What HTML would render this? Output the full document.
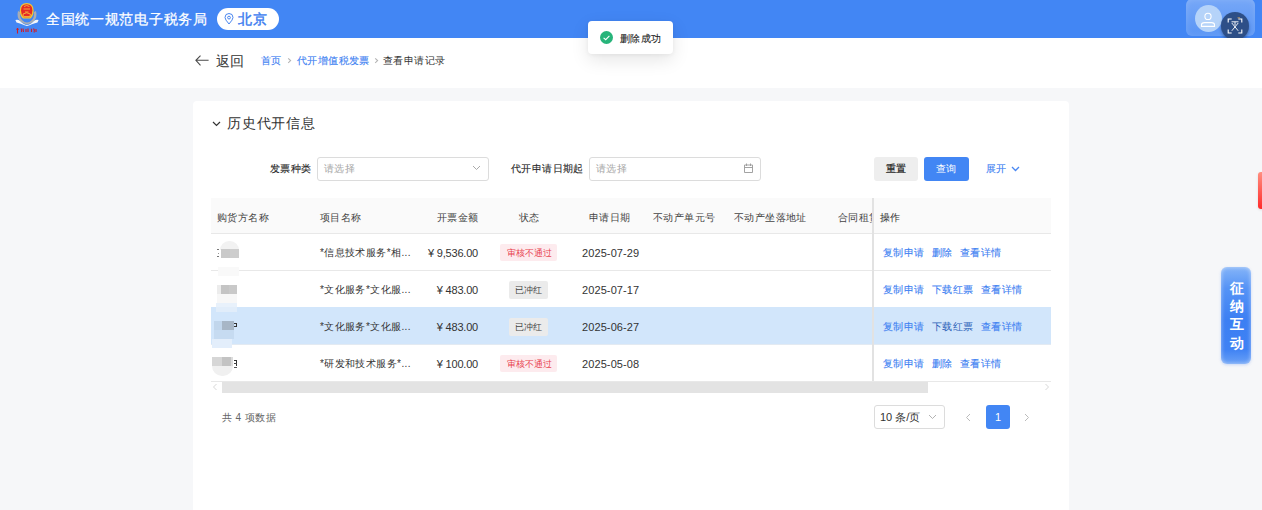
<!DOCTYPE html>
<html><head><meta charset="utf-8">
<style>
*{box-sizing:border-box;margin:0;padding:0}
html,body{width:1262px;height:510px;overflow:hidden;background:#f6f7f9;font-family:"Liberation Sans",sans-serif;color:#333}
.abs{position:absolute}
.hdr{left:0;top:0;width:1262px;height:38px;background:#4286f4}
.sub{left:0;top:38px;width:1262px;height:50px;background:#fff}
.t{position:absolute;white-space:nowrap;line-height:1}
.card{left:193px;top:101px;width:876px;height:420px;background:#fff;border-radius:4px}
.inp{position:absolute;border:1px solid #dcdcdc;border-radius:3px;background:#fff}
.th{position:absolute;top:198px;height:35px;background:#fafafa}
.hl{position:absolute;height:1px;background:#e8e8e8}
.ph{color:#a6a6a6}
.lk{color:#3f82f2;-webkit-text-stroke:0.12px #3f82f2}
.tag{position:absolute;border-radius:2px;text-align:center}
.blur{position:absolute}
</style></head><body>
<!-- header -->
<div class="abs hdr"></div>
<!-- emblem -->
<svg class="abs" style="left:12px;top:0px" width="30" height="38" viewBox="0 0 30 38">
  <path d="M6 11 Q4.5 17 8 21 Q11 24 15 24.5 Q19 24 22 21 Q25.5 17 24 11 L22 12 Q22.5 17 20 20 Q17.5 22.5 15 22.5 Q12.5 22.5 10 20 Q7.5 17 8 12Z" fill="#a9adb3"/>
  <path d="M7.8 10.5 Q7.8 3 14.7 3 Q21.6 3 21.6 10.5 Q21.6 16 18.5 18.5 L11 18.5 Q7.8 16 7.8 10.5Z" fill="#f2c634"/>
  <path d="M9 10.5 Q9 4.3 14.7 4.3 Q20.4 4.3 20.4 10.5 Q20.4 15 17.8 17.3 L11.6 17.3 Q9 15 9 10.5Z" fill="#e52a26"/>
  <path d="M12 6.5 L14.7 5.5 L17.4 6.5 M11.5 9 H18 M13 12 H16.5 M11 14 Q14.7 11.5 18.4 14 L18 16.5 H11.4Z" fill="none" stroke="#f5b63a" stroke-width="0.9"/>
  <path d="M3.4 20 Q6 19 8 21 Q12 25 15 25 Q18 25 22 21 Q24 19 26.6 20 L25.5 22.5 Q21 23.5 17.5 25.3 L15 26 L12.5 25.3 Q9 23.5 4.5 22.5Z" fill="#f4f6f8"/>
  <path d="M5.5 28 V33.5 M4.3 29.3 H6.8 M9 28.5 Q10 30 9.5 32 M11 28.5 L11.5 32 M14 29 V32 M16 28.5 V32 M19.5 28.8 V32 M21.5 28.5 Q23 30 22 32.5 M24 29 V32" stroke="#d31b24" stroke-width="1.1" fill="none"/>
</svg>
<div class="t" style="left:46px;top:12px;font-size:14px;color:#fff;letter-spacing:0.7px;-webkit-text-stroke:0.25px #fff">全国统一规范电子税务局</div>
<div class="abs" style="left:217px;top:8px;width:62px;height:22px;border-radius:11px;background:#fff"></div>
<svg class="abs" style="left:224px;top:13px" width="10" height="12" viewBox="0 0 10 12">
  <path d="M5 11 Q1 6.5 1 4.5 A4 4 0 0 1 9 4.5 Q9 6.5 5 11Z" fill="none" stroke="#4a86ef" stroke-width="1"/>
  <circle cx="5" cy="4.6" r="1.4" fill="none" stroke="#4a86ef" stroke-width="1"/>
</svg>
<div class="t" style="left:238px;top:12px;font-size:14px;letter-spacing:0.5px;color:#3b7cf0;-webkit-text-stroke:0.45px #3b7cf0">北京</div>

<!-- avatar block -->
<div class="abs" style="left:1186px;top:-1px;width:69px;height:37px;border-radius:6px;background:linear-gradient(rgba(255,255,255,0.28),rgba(255,255,255,0.12));box-shadow:inset 0 0 6px rgba(255,255,255,0.15)"></div>
<div class="abs" style="left:1194.5px;top:5px;width:27px;height:27px;border-radius:50%;background:#b5d3f9"></div>
<svg class="abs" style="left:1194px;top:5px" width="27" height="27" viewBox="0 0 27 27">
  <circle cx="14" cy="11.4" r="3.1" fill="none" stroke="#fff" stroke-width="1.1"/>
  <path d="M7.5 21.4 V19.8 Q7.5 17.6 10.5 17.6 H17.5 Q20.5 17.6 20.5 19.8 V21.4Z" fill="none" stroke="#fff" stroke-width="1.1"/>
</svg>
<div class="abs" style="left:1221px;top:12px;width:28px;height:28px;border-radius:50%;background:#2d4f87;box-shadow:0 2px 3px rgba(0,0,0,0.3)"></div>
<svg class="abs" style="left:1221px;top:12px" width="28" height="28" viewBox="0 0 28 28">
  <path d="M7.2 10.5 V7 H10.7 M17.3 7 H20.8 V10.5 M20.8 17.5 V21 H17.3 M10.7 21 H7.2 V17.5" fill="none" stroke="#fff" stroke-width="1.1"/>
  <path d="M10.5 9.8 H17.5 M14 9.8 V13.5 M10.8 18.8 L17.2 11 M17.2 18.8 L10.8 11" fill="none" stroke="#fff" stroke-width="0.9"/>
  <path d="M16.5 5.8 H19" stroke="#d9a45a" stroke-width="0.8"/>
</svg>
<!-- sub header -->
<div class="abs sub"></div>
<svg class="abs" style="left:195px;top:55px" width="14" height="12" viewBox="0 0 14 12">
  <path d="M13.6 5.3 H0.9 M5.5 0.7 L0.9 5.3 L5.5 10.4" fill="none" stroke="#4a4a4a" stroke-width="1.1"/>
</svg>
<div class="t" style="left:216px;top:54px;font-size:14px;color:#333">返回</div>
<div class="t lk" style="left:261px;top:56px;font-size:10px;letter-spacing:0.4px">首页</div>
<svg class="abs" style="left:287px;top:57px" width="5" height="8" viewBox="0 0 5 8"><path d="M1.2 1.3 L3.6 3.6 L1.2 5.9" fill="none" stroke="#b4b4b4" stroke-width="1.1"/></svg>
<div class="t lk" style="left:297px;top:56px;font-size:10px;letter-spacing:0.4px">代开增值税发票</div>
<svg class="abs" style="left:374px;top:57px" width="5" height="8" viewBox="0 0 5 8"><path d="M1.2 1.3 L3.6 3.6 L1.2 5.9" fill="none" stroke="#b4b4b4" stroke-width="1.1"/></svg>
<div class="t" style="left:383px;top:56px;font-size:10px;letter-spacing:0.4px;color:#333">查看申请记录</div>

<!-- card -->
<div class="abs card"></div>
<svg class="abs" style="left:212px;top:121px" width="9" height="6" viewBox="0 0 9 6"><path d="M1 1 L4.5 4.5 L8 1" fill="none" stroke="#333" stroke-width="1.2"/></svg>
<div class="t" style="left:227px;top:116px;font-size:14px;letter-spacing:0.8px;color:#333">历史代开信息</div>

<!-- filters -->
<div class="t" style="left:270px;top:164px;font-size:10px;letter-spacing:0.4px;color:#2a2a2a;-webkit-text-stroke:0.12px #2a2a2a">发票种类</div>
<div class="inp" style="left:317px;top:157px;width:172px;height:24px"></div>
<div class="t ph" style="left:324px;top:164px;font-size:10px;letter-spacing:0.4px">请选择</div>
<svg class="abs" style="left:472px;top:165px" width="9" height="6" viewBox="0 0 9 6"><path d="M1 1 L4.5 4.5 L8 1" fill="none" stroke="#aaa" stroke-width="1"/></svg>
<div class="t" style="left:511px;top:164px;font-size:10px;letter-spacing:0.4px;color:#2a2a2a;-webkit-text-stroke:0.12px #2a2a2a">代开申请日期起</div>
<div class="inp" style="left:589px;top:157px;width:172px;height:24px"></div>
<div class="t ph" style="left:596px;top:164px;font-size:10px;letter-spacing:0.4px">请选择</div>
<svg class="abs" style="left:743px;top:162px" width="11" height="12" viewBox="0 0 11 12"><path d="M1.5 3 H9.5 V10.5 H1.5Z M1.5 5.5 H9.5 M3.5 1.5 V4 M7.5 1.5 V4" fill="none" stroke="#999" stroke-width="0.9"/></svg>

<div class="abs" style="left:874px;top:157px;width:44px;height:24px;border-radius:3px;background:#eeeeee"></div>
<div class="t" style="left:886px;top:164px;font-size:10px;letter-spacing:0.4px;color:#1a1a1a;-webkit-text-stroke:0.2px #1a1a1a">重置</div>
<div class="abs" style="left:924px;top:157px;width:45px;height:24px;border-radius:3px;background:#4286f4"></div>
<div class="t" style="left:936px;top:164px;font-size:10px;letter-spacing:0.4px;color:#fff">查询</div>
<div class="t lk" style="left:986px;top:164px;font-size:10px;letter-spacing:0.4px">展开</div>
<svg class="abs" style="left:1011px;top:166px" width="9" height="6" viewBox="0 0 9 6"><path d="M1 1 L4.5 4.5 L8 1" fill="none" stroke="#4a88f2" stroke-width="1.3"/></svg>

<!-- table -->
<div class="th" style="left:211px;width:840px"></div>
<div class="hl" style="left:211px;top:233px;width:840px"></div>
<div class="hl" style="left:211px;top:270px;width:840px"></div>
<div class="abs" style="left:211px;top:307px;width:840px;height:37px;background:#d2e6fb"></div>
<div class="hl" style="left:211px;top:344px;width:840px;background:#e3eaf2"></div>
<div class="hl" style="left:211px;top:381px;width:840px"></div>
<div class="abs" style="left:872px;top:198px;width:2px;height:183px;background:#e2e2e2"></div>

<div class="t" style="left:217px;top:213px;font-size:10px;letter-spacing:0.4px;color:#444">购货方名称</div>
<div class="t" style="left:320px;top:213px;font-size:10px;letter-spacing:0.4px;color:#444">项目名称</div>
<div class="t" style="left:437px;top:213px;font-size:10px;letter-spacing:0.4px;color:#444">开票金额</div>
<div class="t" style="left:519px;top:213px;font-size:10px;letter-spacing:0.4px;color:#444">状态</div>
<div class="t" style="left:589px;top:213px;font-size:10px;letter-spacing:0.4px;color:#444">申请日期</div>
<div class="t" style="left:653px;top:213px;font-size:10px;letter-spacing:0.4px;color:#444">不动产单元号</div>
<div class="t" style="left:734px;top:213px;font-size:10px;letter-spacing:0.4px;color:#444">不动产坐落地址</div>
<div class="abs" style="left:838px;top:205px;width:34px;height:20px;overflow:hidden"><div class="t" style="left:0;top:8px;font-size:10px;letter-spacing:0.4px;color:#444">合同租赁</div></div>
<div class="t" style="left:880px;top:213px;font-size:10px;letter-spacing:0.4px;color:#333">操作</div>

<!-- row 1 -->
<div class="t" style="left:320px;top:248px;font-size:10px;letter-spacing:0.4px">*信息技术服务*相...</div>
<div class="t" style="left:400px;top:248px;font-size:11px;width:78px;text-align:right;letter-spacing:-0.2px">¥ 9,536.00</div>
<div class="tag" style="left:500px;top:244px;width:57px;height:17px;background:#fdebee"></div>
<div class="t" style="left:507px;top:249px;font-size:9px;color:#e8434f">审核不通过</div>
<div class="t" style="left:582px;top:248px;font-size:11px;letter-spacing:0.1px">2025-07-29</div>
<div class="t lk" style="left:883px;top:248px;font-size:10px;letter-spacing:0.4px">复制申请</div>
<div class="t lk" style="left:932px;top:248px;font-size:10px;letter-spacing:0.4px">删除</div>
<div class="t lk" style="left:960px;top:248px;font-size:10px;letter-spacing:0.4px">查看详情</div>

<!-- row 2 -->
<div class="t" style="left:320px;top:285px;font-size:10px;letter-spacing:0.4px">*文化服务*文化服...</div>
<div class="t" style="left:400px;top:285px;font-size:11px;width:78px;text-align:right;letter-spacing:-0.2px">¥ 483.00</div>
<div class="tag" style="left:509px;top:281px;width:39px;height:18px;background:#ebebeb"></div>
<div class="t" style="left:515px;top:286px;font-size:9px;color:#444">已冲红</div>
<div class="t" style="left:582px;top:285px;font-size:11px;letter-spacing:0.1px">2025-07-17</div>
<div class="t lk" style="left:883px;top:285px;font-size:10px;letter-spacing:0.4px">复制申请</div>
<div class="t lk" style="left:932px;top:285px;font-size:10px;letter-spacing:0.4px">下载红票</div>
<div class="t lk" style="left:981px;top:285px;font-size:10px;letter-spacing:0.4px">查看详情</div>

<!-- row 3 -->
<div class="t" style="left:320px;top:322px;font-size:10px;letter-spacing:0.4px">*文化服务*文化服...</div>
<div class="t" style="left:400px;top:322px;font-size:11px;width:78px;text-align:right;letter-spacing:-0.2px">¥ 483.00</div>
<div class="tag" style="left:509px;top:318px;width:39px;height:18px;background:#ebebeb"></div>
<div class="t" style="left:515px;top:323px;font-size:9px;color:#444">已冲红</div>
<div class="t" style="left:582px;top:322px;font-size:11px;letter-spacing:0.1px">2025-06-27</div>
<div class="t lk" style="left:883px;top:322px;font-size:10px;letter-spacing:0.4px">复制申请</div>
<div class="t" style="left:932px;top:322px;font-size:10px;letter-spacing:0.4px;color:#2c5fb8">下载红票</div>
<div class="t lk" style="left:981px;top:322px;font-size:10px;letter-spacing:0.4px">查看详情</div>

<!-- row 4 -->
<div class="t" style="left:320px;top:359px;font-size:10px;letter-spacing:0.4px">*研发和技术服务*...</div>
<div class="t" style="left:400px;top:359px;font-size:11px;width:78px;text-align:right;letter-spacing:-0.2px">¥ 100.00</div>
<div class="tag" style="left:500px;top:355px;width:57px;height:17px;background:#fdebee"></div>
<div class="t" style="left:507px;top:360px;font-size:9px;color:#e8434f">审核不通过</div>
<div class="t" style="left:582px;top:359px;font-size:11px;letter-spacing:0.1px">2025-05-08</div>
<div class="t lk" style="left:883px;top:359px;font-size:10px;letter-spacing:0.4px">复制申请</div>
<div class="t lk" style="left:932px;top:359px;font-size:10px;letter-spacing:0.4px">删除</div>
<div class="t lk" style="left:960px;top:359px;font-size:10px;letter-spacing:0.4px">查看详情</div>

<!-- blurred names -->
<div class="blur" style="left:220px;top:241px;width:19px;height:9px;border-radius:9px 9px 0 0;background:#f2f2f2"></div>
<div class="blur" style="left:221px;top:249px;width:9px;height:9px;background:#c9c9c9"></div>
<div class="blur" style="left:230px;top:249px;width:9px;height:9px;background:#cdcdcd"></div>
<div class="blur" style="left:217px;top:248.5px;width:2px;height:1.2px;background:#777"></div>
<div class="blur" style="left:217.5px;top:252.5px;width:1.2px;height:1.2px;background:#999"></div>
<div class="blur" style="left:217px;top:256px;width:2px;height:1.2px;background:#777"></div>
<div class="blur" style="left:218px;top:267px;width:21px;height:9px;background:#f9f9f9"></div>
<div class="blur" style="left:217px;top:285px;width:4px;height:9px;background:#ececec"></div>
<div class="blur" style="left:221px;top:285px;width:8px;height:9px;background:#c4c4c4"></div>
<div class="blur" style="left:229px;top:285px;width:8px;height:9px;background:#c9c9c9"></div>
<div class="blur" style="left:217px;top:294px;width:20px;height:9px;background:#f7f7f7"></div>
<div class="blur" style="left:216px;top:303px;width:21px;height:4px;background:#e8f1fb"></div>
<div class="blur" style="left:216px;top:307px;width:21px;height:5px;background:#e1edfa"></div>
<div class="blur" style="left:213.5px;top:321px;width:8px;height:9px;background:#c1d6ec"></div>
<div class="blur" style="left:221.5px;top:321px;width:12.5px;height:9px;background:#a7b6c6"></div>
<div class="blur" style="left:234px;top:323px;width:3px;height:1.2px;background:#333"></div>
<div class="blur" style="left:235.5px;top:323px;width:1.2px;height:3.5px;background:#333"></div>
<div class="blur" style="left:234px;top:326px;width:3px;height:1.2px;background:#333"></div>
<div class="blur" style="left:213.5px;top:330px;width:20.5px;height:8.5px;background:#c6dbf1"></div>
<div class="blur" style="left:212px;top:338.5px;width:20px;height:9.5px;background:#e3eefb"></div>
<div class="blur" style="left:212px;top:357px;width:9.5px;height:9px;background:#d6d6d6"></div>
<div class="blur" style="left:221.5px;top:357px;width:9.5px;height:9px;background:#c3c3c3"></div>
<div class="blur" style="left:231px;top:357px;width:2px;height:9px;background:#dcdcdc"></div>
<div class="blur" style="left:212px;top:366px;width:21px;height:9.5px;border-radius:0 0 10px 10px;background:#f0f0f0"></div>
<div class="blur" style="left:234px;top:360px;width:3px;height:1.2px;background:#333"></div>
<div class="blur" style="left:235.5px;top:360px;width:1.2px;height:6px;background:#333"></div>
<div class="blur" style="left:234px;top:363px;width:2.5px;height:1.2px;background:#444"></div>
<div class="blur" style="left:234px;top:367px;width:3px;height:1.2px;background:#555"></div>
<!-- scrollbar -->
<div class="abs" style="left:222px;top:382px;width:706px;height:11px;background:#e3e3e3"></div>
<svg class="abs" style="left:212px;top:383px" width="6" height="8" viewBox="0 0 6 8"><path d="M4.5 1 L1.5 4 L4.5 7" fill="none" stroke="#ccc" stroke-width="0.8"/></svg>
<svg class="abs" style="left:1044px;top:383px" width="6" height="8" viewBox="0 0 6 8"><path d="M1.5 1 L4.5 4 L1.5 7" fill="none" stroke="#ccc" stroke-width="0.8"/></svg>

<!-- footer -->
<div class="t" style="left:222px;top:413px;font-size:10px;letter-spacing:0.4px;color:#666">共 4 项数据</div>
<div class="inp" style="left:874px;top:405px;width:71px;height:24px"></div>
<div class="t" style="left:880px;top:412px;font-size:11px;color:#333">10 条/页</div>
<svg class="abs" style="left:928px;top:414px" width="9" height="6" viewBox="0 0 9 6"><path d="M1 1 L4.5 4.5 L8 1" fill="none" stroke="#aaa" stroke-width="0.9"/></svg>
<svg class="abs" style="left:965px;top:413px" width="6" height="9" viewBox="0 0 6 9"><path d="M5 1 L1.5 4.5 L5 8" fill="none" stroke="#bbb" stroke-width="1"/></svg>
<div class="abs" style="left:986px;top:405px;width:24px;height:24px;border-radius:3px;background:#4286f4"></div>
<div class="t" style="left:986px;top:412px;width:24px;text-align:center;font-size:11px;color:#fff">1</div>
<svg class="abs" style="left:1024px;top:413px" width="6" height="9" viewBox="0 0 6 9"><path d="M1 1 L4.5 4.5 L1 8" fill="none" stroke="#bbb" stroke-width="1"/></svg>

<!-- right floats -->
<div class="abs" style="left:1258px;top:172px;width:8px;height:37px;border-radius:3px;background:linear-gradient(#ff8f80,#ff2b2b);box-shadow:0 1px 3px rgba(0,0,0,0.1)"></div>
<div class="abs" style="left:1221px;top:266.5px;width:30px;height:97px;border-radius:6px;background:linear-gradient(180deg,#84b4f8 0%,#5593f6 22%,#3c7ff3 55%,#3f82f4 85%,#6aa1f6 100%);box-shadow:inset 0 0 4px rgba(255,255,255,0.55),0 1px 3px rgba(60,120,240,0.25)"></div>
<div class="t" style="left:1229.5px;top:279.5px;width:15px;font-size:13.5px;line-height:18.4px;color:#fff;font-weight:bold;white-space:normal">征纳互动</div>

<!-- toast -->
<div class="abs" style="left:588px;top:21px;width:85px;height:33px;border-radius:4px;background:#fff;box-shadow:0 6px 18px rgba(0,0,0,0.10),0 1px 4px rgba(0,0,0,0.05)"></div>
<svg class="abs" style="left:600px;top:31px" width="13" height="13" viewBox="0 0 13 13"><circle cx="6.5" cy="6.5" r="6.5" fill="#27b47a"/><path d="M3.6 6.9 L5.7 8.7 L9.4 4.9" fill="none" stroke="#fff" stroke-width="1.1"/></svg>
<div class="t" style="left:620px;top:33.5px;font-size:10px;letter-spacing:0.4px;color:#2a2a2a;-webkit-text-stroke:0.12px #2a2a2a">删除成功</div>
</body></html>
